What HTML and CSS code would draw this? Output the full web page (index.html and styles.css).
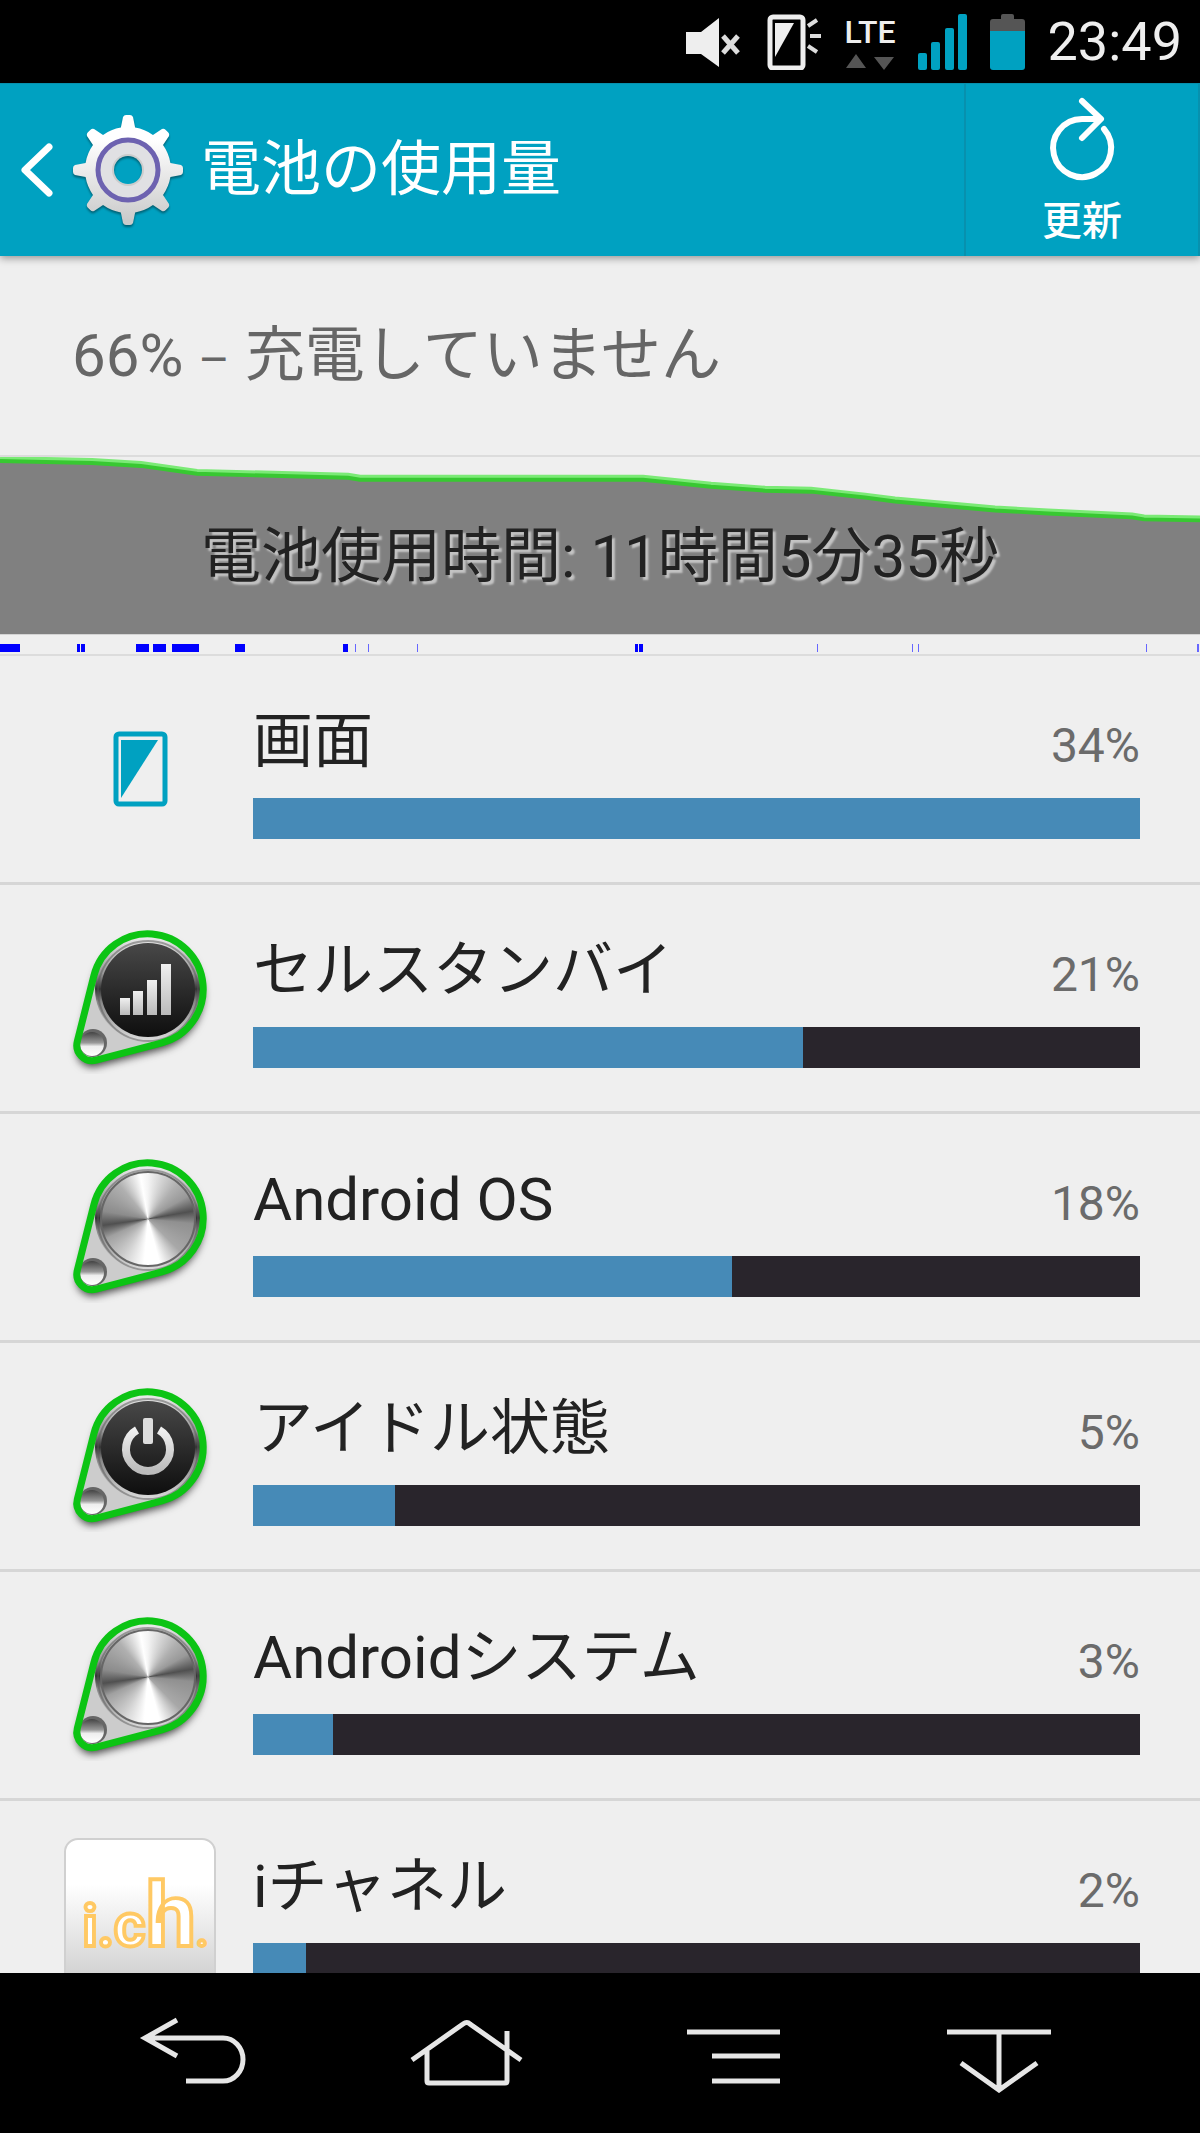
FILE: index.html
```html
<!DOCTYPE html>
<html lang="ja">
<head>
<meta charset="utf-8">
<meta name="viewport" content="width=device-width, initial-scale=1">
<title>電池の使用量</title>
<link rel="stylesheet" href="styles.css">
</head>
<body>
<svg class="defs" width="0" height="0" aria-hidden="true">
  <defs>
    <linearGradient id="metal" x1="0" y1="0" x2="0" y2="1">
      <stop offset="0" stop-color="#eee"/><stop offset=".35" stop-color="#999"/><stop offset=".5" stop-color="#333"/><stop offset=".62" stop-color="#888"/><stop offset="1" stop-color="#ddd"/>
    </linearGradient>
    <linearGradient id="dark" x1="0" y1="0" x2="0" y2="1">
      <stop offset="0" stop-color="#484848"/><stop offset="1" stop-color="#0e0e0e"/>
    </linearGradient>
    <linearGradient id="glyph" x1="0" y1="0" x2="0" y2="1">
      <stop offset="0" stop-color="#f0f0f0"/><stop offset="1" stop-color="#bbb"/>
    </linearGradient>
    <linearGradient id="rivet" x1="0" y1="0" x2="0" y2="1">
      <stop offset="0" stop-color="#444"/><stop offset=".45" stop-color="#999"/><stop offset=".6" stop-color="#eee"/><stop offset="1" stop-color="#fff"/>
    </linearGradient>
    <filter id="drop" x="-20%" y="-20%" width="140%" height="150%">
      <feDropShadow dx="0" dy="6" stdDeviation="4" flood-color="#000" flood-opacity=".75"/>
    </filter>
    <g id="tag">
      <path d="M13.3 119.4 29.9 53.6A55.5 55.5 0 1 1 97.9 120.9L32.3 138.2A15.5 15.5 0 0 1 13.3 119.4Z" fill="#ccc" filter="url(#drop)"/>
      <circle cx="84" cy="67" r="53" fill="url(#metal)"/>
      <circle cx="84" cy="69" r="50" fill="none" stroke="#555" stroke-opacity=".5" stroke-width="2"/>
      <circle cx="29" cy="121" r="14" fill="#666"/>
      <circle cx="28" cy="122" r="12" fill="url(#rivet)"/>
      <path d="M13.3 119.4 29.9 53.6A55.5 55.5 0 1 1 97.9 120.9L32.3 138.2A15.5 15.5 0 0 1 13.3 119.4Z" fill="none" stroke="#0cc414" stroke-width="7"/>
    </g>
  </defs>
</svg>

<div class="status">
  <svg width="56" height="56" viewBox="0 0 56 56" role="img" aria-label="消音"><path d="M1 18h15L34 4v49L16 40H1Z" fill="#eee"/><path d="m38 22 15 17m0-17L38 39" stroke="#ddd" stroke-width="5"/></svg>
  <svg width="56" height="56" viewBox="0 0 56 56" role="img" aria-label="画面点灯"><rect x="3" y="3" width="33" height="51" rx="3" fill="none" stroke="#eee" stroke-width="5"/><path d="M8 9h19L8 43Z" fill="#eee"/><path d="m41 12 9-6M43 22h11M41 32l9 6" stroke="#ddd" stroke-width="4"/></svg>
  <div class="network">
    <span>LTE</span>
    <svg width="48" height="16" viewBox="0 0 48 16" aria-hidden="true"><path d="M0 14 10 0l10 14ZM28 3h20L38 16Z" fill="#555"/></svg>
  </div>
  <svg width="50" height="56" viewBox="0 0 50 56" role="img" aria-label="電波"><g fill="#00a1c1"><rect y="39" width="9" height="17" rx="2"/><rect x="13" y="28" width="9" height="28" rx="2"/><rect x="27" y="14" width="9" height="42" rx="2"/><rect x="40" width="9" height="56" rx="2"/></g></svg>
  <svg width="36" height="56" viewBox="0 0 36 56" role="img" aria-label="電池残量"><path d="M0 18V8q0-3 3-3h8V2q0-2 2-2h9q2 0 2 2v3h8q3 0 3 3v10Z" fill="#555"/><path d="M0 17h35v36q0 3-3 3H3q-3 0-3-3Z" fill="#00a1c1"/></svg>
  <time class="clock">23:49</time>
</div>

<header class="appbar">
  <button class="up" type="button" aria-label="戻る">
    <svg width="36" height="60" viewBox="0 0 36 60"><path d="M31 7 7 30l24 23" fill="none" stroke="#fff" stroke-width="7" stroke-linecap="round" stroke-linejoin="round"/></svg>
    <svg width="116" height="120" viewBox="-58 -60 116 120">
      <defs>
        <linearGradient id="gear" gradientUnits="userSpaceOnUse" x1="0" y1="-50" x2="0" y2="50"><stop offset=".2" stop-color="#fff"/><stop offset="1" stop-color="#cbcbcb"/></linearGradient>
        <path id="tooth" d="M-8-38-5-53q1-2 3-2h4q2 0 3 2l3 15Z"/>
        <mask id="bore"><rect x="-60" y="-60" width="120" height="120" fill="#fff"/><circle r="14" fill="#000"/></mask>
        <clipPath id="gearshape"><circle r="43"/><use href="#tooth"/><use href="#tooth" transform="rotate(45)"/><use href="#tooth" transform="rotate(90)"/><use href="#tooth" transform="rotate(135)"/><use href="#tooth" transform="rotate(180)"/><use href="#tooth" transform="rotate(225)"/><use href="#tooth" transform="rotate(270)"/><use href="#tooth" transform="rotate(315)"/></clipPath>
      </defs>
      <g class="gear"><g mask="url(#bore)">
        <rect x="-58" y="-60" width="116" height="120" fill="url(#gear)" clip-path="url(#gearshape)"/>
        <circle r="22" fill="none" stroke="#e0e0e3" stroke-width="16"/>
        <circle r="15" fill="none" stroke="#ccc" stroke-width="2"/>
        <circle r="30" fill="none" stroke="#6d62b0" stroke-width="5"/>
      </g></g>
    </svg>
  </button>
  <h1>電池の使用量</h1>
  <button class="refresh" type="button">
    <svg width="72" height="90" viewBox="0 0 72 90" aria-hidden="true"><path d="M58 33A29 29 0 1 1 36 23H54M36 5 55 23 36 42" fill="none" stroke="#fff" stroke-width="6" stroke-linecap="round" stroke-linejoin="round"/></svg>
    <span>更新</span>
  </button>
</header>

<main>
  <p class="summary">66% <span class="dash">–</span> 充電していません</p>

  <section class="history">
    <svg class="chart" viewBox="0 0 1200 199" preserveAspectRatio="none" aria-hidden="true">
      <path d="M0 3 92 5 141 8 197 16 348 20 360 22H643L711 29 765 33 811 34 865 40 895 44 995 53 1048 56 1132 60 1144 62 1200 63V179H0Z" fill="#808080"/>
      <path d="M0 2 92 4 141 7 197 15 348 19 360 21H643L711 28 765 32 811 33 865 39 895 43 995 52 1048 55 1132 59 1144 61 1200 62" fill="none" stroke="#7bea76" stroke-width="6"/>
      <path d="M0 4 92 6 141 9 197 17 348 21 360 23H643L711 30 765 34 811 35 865 41 895 45 995 54 1048 57 1132 61 1144 63 1200 64" fill="none" stroke="#38c832" stroke-width="4"/>
      <path d="M0 193h20M77 193h3m1 0h4m51 0h13m4 0h13m6 0h27m36 0h10m98 0h5" stroke="#00f" stroke-width="8"/>
      <path d="M635 193h3m1 0h4" stroke="#00f" stroke-width="8"/>
      <path d="M355 193h1m12 0h1m48 0h1m399 0h1m94 0h1m5 0h1m227 0h1m50 0h2" stroke="#66f" stroke-width="8"/>
    </svg>
    <p class="duration">電池使用時間: 11時間5分35秒</p>
  </section>

  <ul class="list">
    <li class="row">
      <svg class="icon" viewBox="0 0 152 152" aria-hidden="true"><rect x="52" y="41" width="49" height="70" rx="3" fill="none" stroke="#00a1c1" stroke-width="5"/><path d="M57 47h37L57 105Z" fill="#00a1c1"/></svg>
      <div class="usage">
        <div class="text"><span class="name">画面</span><span class="percent">34%</span></div>
        <div class="bar"><div class="fill" style="width:100%"></div></div>
      </div>
    </li>
    <li class="row">
      <svg class="icon" viewBox="0 0 152 152" aria-hidden="true"><use href="#tag"/><circle cx="84" cy="68" r="47" fill="url(#dark)"/><g fill="url(#glyph)"><rect x="56" y="76" width="10" height="17"/><rect x="69" y="69" width="10" height="24"/><rect x="83" y="58" width="10" height="35"/><rect x="97" y="42" width="10" height="51"/></g></svg>
      <div class="usage">
        <div class="text"><span class="name">セルスタンバイ</span><span class="percent">21%</span></div>
        <div class="bar"><div class="fill" style="width:62%"></div></div>
      </div>
    </li>
    <li class="row">
      <svg class="icon" viewBox="0 0 152 152" aria-hidden="true"><use href="#tag"/><foreignObject x="36" y="20" width="96" height="96"><div class="disc"></div></foreignObject></svg>
      <div class="usage">
        <div class="text"><span class="name">Android OS</span><span class="percent">18%</span></div>
        <div class="bar"><div class="fill" style="width:54%"></div></div>
      </div>
    </li>
    <li class="row">
      <svg class="icon" viewBox="0 0 152 152" aria-hidden="true"><use href="#tag"/><circle cx="84" cy="68" r="47" fill="url(#dark)"/><path d="M73 50a22 22 0 1 0 22 0" fill="none" stroke="url(#glyph)" stroke-width="8"/><rect x="79" y="38" width="10" height="26" rx="2" fill="#ddd"/></svg>
      <div class="usage">
        <div class="text"><span class="name">アイドル状態</span><span class="percent">5%</span></div>
        <div class="bar"><div class="fill" style="width:16%"></div></div>
      </div>
    </li>
    <li class="row">
      <svg class="icon" viewBox="0 0 152 152" aria-hidden="true"><use href="#tag"/><foreignObject x="36" y="20" width="96" height="96"><div class="disc"></div></foreignObject></svg>
      <div class="usage">
        <div class="text"><span class="name">Androidシステム</span><span class="percent">3%</span></div>
        <div class="bar"><div class="fill" style="width:9%"></div></div>
      </div>
    </li>
    <li class="row">
      <svg class="icon channel" viewBox="0 0 152 152"><text x="17" y="109" font-size="58">i.</text><text x="49" y="109" font-size="62">c</text><text x="82" y="109" font-size="92">h</text><text x="134" y="109" font-size="40">.</text></svg>
      <div class="usage">
        <div class="text"><span class="name">iチャネル</span><span class="percent">2%</span></div>
        <div class="bar"><div class="fill" style="width:6%"></div></div>
      </div>
    </li>
  </ul>
</main>

<nav class="navbar">
  <button type="button" aria-label="戻る"><svg viewBox="0 0 120 80"><path d="M43 7 11 25l32 18M11 25H89a20 21.5 0 0 1 0 43H52"/></svg></button>
  <button type="button" aria-label="ホーム"><svg viewBox="0 0 120 80"><path d="M9 47 60 11q4-3 7 0l51 36M24 38v30q0 2 2 2h76q2 0 2-2V18"/></svg></button>
  <button type="button" aria-label="メニュー"><svg viewBox="0 0 120 80"><path d="M16 19h93M41 43h68M41 68h68"/></svg></button>
  <button type="button" aria-label="閉じる"><svg viewBox="0 0 120 80"><path d="M7 19h104M59 19v56M21 50l38 27 38-27"/></svg></button>
</nav>
</body>
</html>
```
FILE: styles.css
```css
* { box-sizing: border-box; }

body {
  display: flex;
  flex-direction: column;
  height: 100vh;
  margin: 0;
  background: #efefef;
  color: #222;
  font-family: Roboto, "Noto Sans CJK JP", sans-serif;
  font-size: 60px;
}

svg { display: block; flex: none; }
.defs { position: absolute; }
button { padding: 0; border: 0; background: none; color: inherit; font: inherit; }

.status {
  display: flex;
  flex: none;
  align-items: center;
  justify-content: flex-end;
  gap: 22px;
  height: 83px;
  padding-right: 18px;
  background: #000;
  color: #eee;
}
.status > svg:first-child { margin-right: 4px; }
.network {
  display: flex;
  flex-direction: column;
  align-items: center;
  gap: 4px;
  font-size: 32px;
  font-weight: 500;
  line-height: 36px;
}
.clock { font-size: 54px; line-height: 80px; }

.appbar {
  position: relative;
  display: flex;
  flex: none;
  align-items: center;
  height: 173px;
  padding-left: 18px;
  background: #00a1c1;
  border-top: 1px solid #0790ad;
  box-shadow: 0 2px 8px rgba(0, 0, 0, .4);
  color: #fff;
}
.up { display: flex; align-items: center; gap: 16px; margin-right: 15px; }
.gear { filter: drop-shadow(0 2px 1px rgba(0, 0, 0, .4)); }
.appbar h1 { flex: 1; margin: 0; font-size: 60px; font-weight: 400; line-height: 84px; }
.refresh {
  display: flex;
  flex-direction: column;
  align-items: center;
  align-self: stretch;
  justify-content: center;
  gap: 8px;
  width: 236px;
  padding-top: 6px;
  border-left: 2px solid #0791ae;
  border-right: 2px solid #0791ae;
  font-size: 40px;
  font-weight: 500;
  line-height: 56px;
}

main { flex: 1; min-height: 0; overflow: hidden; }
.summary { margin: 0; padding: 58px 72px 57px; color: #666; line-height: 84px; }
.dash { font-size: 48px; line-height: 1; }

.history {
  display: grid;
  border-top: 2px solid #dcdcdc;
  border-bottom: 2px solid #dcdcdc;
}
.history > * { grid-area: 1 / 1; }
.chart { width: 100%; height: 197px; }
.duration {
  margin: 0;
  padding-top: 58px;
  line-height: 84px;
  text-align: center;
  text-shadow: 3px 3px 2px #c4c4c4;
}

.list { margin: 0; padding: 0; list-style: none; }
.row {
  display: flex;
  align-items: center;
  gap: 37px;
  min-height: 229px;
  padding: 0 60px 0 64px;
  border-bottom: 3px solid #d6d6d6;
}
.icon { width: 152px; height: 152px; }
.usage { flex: 1; }
.text {
  display: flex;
  align-items: baseline;
  justify-content: space-between;
  height: 84px;
  margin-bottom: 14px;
  line-height: 84px;
}
.percent { color: #6b6b6b; font-size: 48px; }
.bar { height: 41px; background: #29252c; }
.fill { height: 100%; background: #468ab7; }

.disc {
  width: 96px;
  height: 96px;
  border: 2px solid #666;
  border-radius: 50%;
  background: conic-gradient(#f4f4f4, #b0b0b0 40deg, #999 60deg, #505050 80deg, #909090 96deg, #a8a8a8 135deg, #fff 165deg, #fff 185deg, #ccc 215deg, #a0a0a0 245deg, #505050 262deg, #8c8c8c 280deg, #b0b0b0 320deg, #fff 350deg, #f4f4f4);
}
.channel {
  border: 2px solid #d0d0d0;
  border-radius: 14px;
  background: linear-gradient(#fff 30%, #ccc);
  fill: #fff;
  stroke: #ffc964;
  stroke-width: 4px;
  font-weight: 700;
}

.navbar {
  display: flex;
  flex: none;
  height: 160px;
  padding: 0 66px 0 60px;
  background: #000;
}
.navbar button { display: flex; flex: 1; align-items: center; justify-content: center; }
.navbar svg { width: 120px; height: 80px; fill: none; stroke: #e6e6e6; stroke-width: 5px; }
```
